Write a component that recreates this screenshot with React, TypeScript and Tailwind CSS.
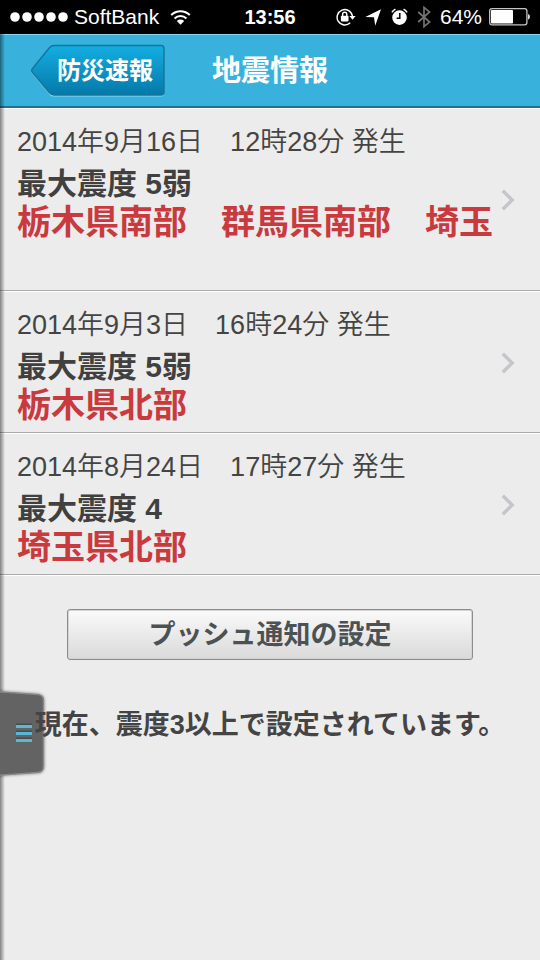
import type { ReactNode } from "react";

type Quake = { id: string; time: string; intensity: string; area: string; tall?: boolean };

const quakes: Quake[] = [
  {
    id: "q1",
    time: "2014年9月16日　12時28分 発生",
    intensity: "最大震度 5弱",
    area: "栃木県南部　群馬県南部　埼玉",
    tall: true,
  },
  { id: "q2", time: "2014年9月3日　16時24分 発生", intensity: "最大震度 5弱", area: "栃木県北部" },
  { id: "q3", time: "2014年8月24日　17時27分 発生", intensity: "最大震度 4", area: "埼玉県北部" },
];

function SignalDots() {
  return (
    <svg width="58" height="12" viewBox="0 0 58 12" fill="#fff" aria-hidden="true">
      {[5, 17, 29, 41, 53].map((x) => (
        <circle key={x} cx={x} cy="6" r="4.8" />
      ))}
    </svg>
  );
}

function WifiIcon() {
  return (
    <svg width="21" height="17" viewBox="0 0 22 18" fill="none" stroke="#fff" strokeWidth="2.2" aria-hidden="true">
      <path d="M1.2 6.4a13.8 13.8 0 0 1 19.6 0" />
      <path d="M4.7 10a9 9 0 0 1 12.6 0" />
      <path d="M11 16.8l-3.9-4.1a5.6 5.6 0 0 1 7.8 0z" fill="#fff" stroke="none" />
    </svg>
  );
}

function RotationLockIcon() {
  return (
    <svg width="20" height="18" viewBox="0 0 20 18" fill="none" aria-hidden="true">
      <path d="M14.2 14.8A7.700 7.700 0 1 1 16.400 8" stroke="#fff" strokeWidth="1.4" />
      <path d="M13.400 8h6.200l-3.100 3.800z" fill="#fff" />
      <rect x="4.900" y="7.800" width="7.600" height="5.600" rx="0.8" fill="#fff" />
      <path d="M6.600 8V6.400a2.100 2.100 0 0 1 4.200 0V8" stroke="#fff" strokeWidth="1.4" />
    </svg>
  );
}

function LocationIcon() {
  return (
    <svg width="17" height="17" viewBox="0 0 17 17" fill="#fff" aria-hidden="true">
      <path d="M16 .3 10.200 16.700 9 8.200.3 8z" />
    </svg>
  );
}

function AlarmIcon() {
  return (
    <svg width="17" height="18" viewBox="0 0 17 18" aria-hidden="true">
      <circle cx="8.500" cy="9.600" r="7.300" fill="#fff" />
      <path d="M.9 4.400A10 10 0 0 1 4.400 1.200M12.600 1.200a10 10 0 0 1 3.500 3.200" fill="none" stroke="#fff" strokeWidth="1.500" />
      <path d="M8.800 5v5.200H5.600" fill="none" stroke="#000" strokeWidth="1.500" />
    </svg>
  );
}

function BluetoothIcon() {
  return (
    <svg width="14" height="22" viewBox="0 0 14 22" fill="none" stroke="#737373" strokeWidth="1.7" aria-hidden="true">
      <path d="M1.2 6l11.4 10L7 20.6V1.4L12.6 6 1.2 16" />
    </svg>
  );
}

function BatteryIcon() {
  return (
    <svg width="41" height="18" viewBox="0 0 41 18" aria-hidden="true">
      <rect x="0.7" y="0.7" width="37.2" height="16.2" rx="2.4" fill="none" stroke="#c4c4c4" strokeWidth="1.3" />
      <rect x="2" y="2" width="22" height="13.600" rx="0.8" fill="#fff" />
      <path d="M39 6v5.600c1.300-.4 1.900-1.400 1.900-2.800s-.6-2.400-1.900-2.800z" fill="#ddd" />
    </svg>
  );
}

function Chevron() {
  return (
    <svg
      width="14"
      height="22"
      viewBox="0 0 14 22"
      fill="none"
      stroke="#c5c5ca"
      strokeWidth="3.4"
      className="shrink-0"
      aria-hidden="true"
    >
      <path d="M1.8 1.8 11.2 11l-9.4 9.2" />
    </svg>
  );
}

function StatusBar() {
  return (
    <div className="grid h-[34px] grid-cols-[1fr_auto_1fr] items-center bg-black px-[10px] text-[21px] leading-[34px] text-white">
      <div className="flex items-center">
        <SignalDots />
        <span className="mr-[11px] ml-[6px]">SoftBank</span>
        <WifiIcon />
      </div>
      <span className="text-[20px] font-bold">13:56</span>
      <div className="flex items-center justify-end gap-[9px]">
        <RotationLockIcon />
        <LocationIcon />
        <AlarmIcon />
        <BluetoothIcon />
        <div className="flex items-center gap-[7px]">
          <span>64%</span>
          <BatteryIcon />
        </div>
      </div>
    </div>
  );
}

function BackButton({ children }: { children: ReactNode }) {
  return (
    <button
      type="button"
      className="relative h-[54px] w-[134px] pl-[26px] text-left text-[24px] font-bold leading-[54px] text-white"
    >
      <svg className="absolute inset-0" width="134" height="54" viewBox="0 0 134 54" aria-hidden="true">
        <defs>
          <linearGradient id="back-fill" x1="0" y1="0" x2="0" y2="1">
            <stop offset="0" stopColor="#14aee2" />
            <stop offset="1" stopColor="#0579a8" />
          </linearGradient>
        </defs>
        <path
          d="M23 2.6h107q3 0 3 3v44q0 3-3 3H23q-2.6 0-4.600-2.200L1.500 30q-1.600-2 0-4L18.400 4.800Q20.400 2.600 23 2.600z"
          fill="#8fd8f2"
        />
        <path
          d="M23 1.500h107q3 0 3 3v43.500q0 3-3 3H23q-2.600 0-4.600-2.200L1.500 28.500q-1.600-2 0-4L18.400 3.700Q20.400 1.500 23 1.500z"
          fill="url(#back-fill)"
          stroke="#14759c"
          strokeWidth="1.4"
        />
      </svg>
      <span className="relative">{children}</span>
    </button>
  );
}

function QuakeRow({ quake }: { quake: Quake }) {
  return (
    <li className="border-t border-b border-t-white border-b-[#aaa]">
      <a
        href={`#${quake.id}`}
        className={`flex items-center justify-between pt-[15px] pr-[25px] pl-[17px] ${quake.tall ? "pb-[49px]" : "pb-[8px]"}`}
      >
        <div className="min-w-0 whitespace-nowrap">
          <p className="mb-[5px] text-[27px] leading-[36px] font-[350] text-[#444]">{quake.time}</p>
          <p className="text-[30px] leading-[38px] font-bold text-[#404040]">{quake.intensity}</p>
          <p className="text-[34px] leading-[38px] font-bold text-[#c93a3e]">{quake.area}</p>
        </div>
        <div className={quake.tall ? "-mb-[35px]" : "mt-[-6px]"}>
          <Chevron />
        </div>
      </a>
    </li>
  );
}

function MenuTab() {
  return (
    <button type="button" aria-label="メニュー" className="absolute top-[688px] left-0 h-[92px] w-[50px]">
      <svg width="50" height="92" viewBox="0 0 50 92" aria-hidden="true">
        <defs>
          <filter id="tab-shadow" x="-20%" y="-20%" width="140%" height="140%">
            <feDropShadow dx="0" dy="0" stdDeviation="1.5" floodColor="#000" floodOpacity="0.45" />
          </filter>
        </defs>
        <path
          d="M-4 3.500 38 6.500q5.500.5 5.500 6v66q0 5.500-5.500 6L-4 87.500z"
          fill="#636363"
          stroke="#898989"
          strokeWidth="1.6"
          filter="url(#tab-shadow)"
        />
        <path d="M16 36.500h16M16 43.500h16M16 50.500h16" stroke="#4c4c4c" strokeWidth="2" />
        <path d="M16 38.500h16M16 45.500h16M16 52.500h16" stroke="#58b8d8" strokeWidth="3" />
      </svg>
    </button>
  );
}

export default function App() {
  return (
    <div
      lang="ja"
      className="relative flex min-h-screen flex-col overflow-hidden bg-[#ececec] font-['Liberation_Sans','Noto_Sans_CJK_JP',sans-serif]"
    >
      <StatusBar />
      <div className="relative flex-1">
        <header className="grid h-[74px] grid-cols-[1fr_auto_1fr] items-center border-t border-b-2 border-t-[#8fd4ee] border-b-[#226f92] bg-[#38b2dd]">
          <div className="pl-[31px]">
            <BackButton>防災速報</BackButton>
          </div>
          <h1 className="text-[29px] leading-[54px] font-bold text-white">地震情報</h1>
        </header>
        <main>
          <ul>
            {quakes.map((q) => (
              <QuakeRow key={q.id} quake={q} />
            ))}
          </ul>
          <div className="border-t border-white px-[67px] pt-[33px]">
            <button
              type="button"
              className="h-[51px] w-full rounded-[3px] border border-[#8c8c8c] bg-linear-to-b from-[#fafafa] to-[#dadada] text-[27px] leading-[46px] font-bold text-[#4c5254] shadow-[inset_0_0_0_1px_#d4d4d4]"
            >
              プッシュ通知の設定
            </button>
          </div>
          <p className="relative z-10 mt-[46px] text-center text-[27px] leading-[38px] font-bold whitespace-nowrap text-[#444]">
            現在、震度3以上で設定されています。
          </p>
        </main>
        <div className="pointer-events-none absolute inset-y-0 left-0 w-[5px] bg-linear-to-r from-black/45 to-transparent" />
      </div>
      <MenuTab />
    </div>
  );
}
